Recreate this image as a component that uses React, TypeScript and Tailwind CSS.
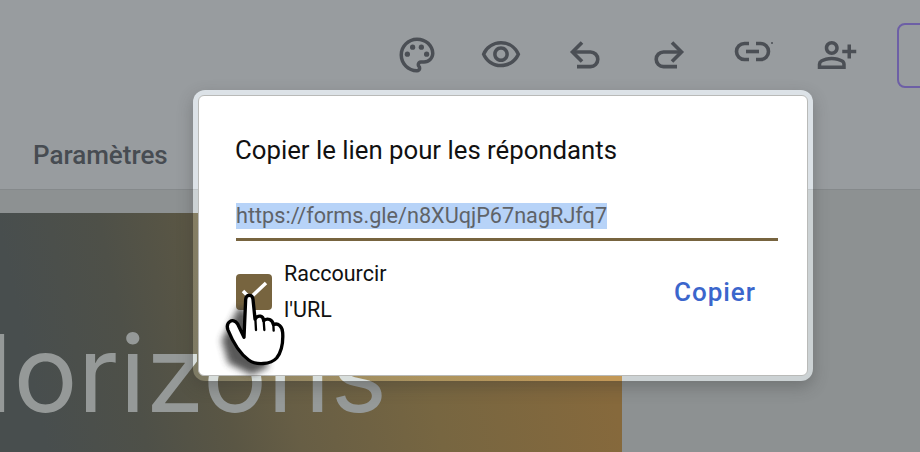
import { MdOutlinePalette, MdOutlineVisibility, MdOutlinePersonAddAlt } from "react-icons/md";

function UndoIcon() {
  return (
    <svg width={42} height={42} viewBox="0 0 42 42" fill="none" stroke="#4b4f55" strokeWidth={3.6}>
      <path d="M8.5 18 H26.5 A7.3 7.3 0 0 1 26.5 32.6 H13" />
      <path d="M18 8.5 L8.5 18 L18 27.5" />
    </svg>
  );
}

function RedoIcon() {
  return (
    <svg width={42} height={42} viewBox="0 0 42 42" fill="none" stroke="#4b4f55" strokeWidth={3.6}>
      <path d="M33.5 18 H15.5 A7.3 7.3 0 0 0 15.5 32.6 H29" />
      <path d="M24 8.5 L33.5 18 L24 27.5" />
    </svg>
  );
}

function LinkIcon() {
  return (
    <svg width={42} height={42} viewBox="0 0 42 42" fill="none" stroke="#4b4f55" strokeWidth={3.6}>
      <path d="M17 9.5 H12.5 A8 8 0 0 0 12.5 25.5 H17" />
      <path d="M24 9.5 H28.5 A8 8 0 0 1 28.5 25.5 H24" />
      <path d="M14 17.5 H27" />
      <circle cx={40} cy={9} r={1} fill="#4b4f55" stroke="none" />
    </svg>
  );
}

const toolbar = [
  { id: "palette", icon: <MdOutlinePalette size={42} color="#4b4f55" /> },
  { id: "preview", icon: <MdOutlineVisibility size={42} color="#4b4f55" /> },
  { id: "undo", icon: <UndoIcon /> },
  { id: "redo", icon: <RedoIcon /> },
  { id: "link", icon: <LinkIcon /> },
  { id: "share", icon: <MdOutlinePersonAddAlt size={42} color="#4b4f55" /> },
];

function HandCursor() {
  return (
    <svg
      className="absolute left-[-9px] top-[154px]"
      width={220}
      height={150}
      viewBox="0 0 660 450"
      fill="none"
    >
      <defs>
        <filter id="hand-blur" x="-40%" y="-40%" width="180%" height="180%">
          <feGaussianBlur stdDeviation="11" />
        </filter>
      </defs>
      <path
        d="M150 165 L95 270 L115 340 L185 375 L235 352 L200 220 Z"
        fill="#3a3a3a"
        opacity="0.85"
        filter="url(#hand-blur)"
      />
      <path
        d="M162 262 L167 148 C168 132 188 132 189 148 L195 207 C205 193 220 197 221 212 C232 203 248 208 250 224 C264 218 277 228 278 248 C280 280 274 306 260 324 C242 344 198 346 176 330 C152 312 130 280 114 240 C106 218 128 200 143 222 Z"
        fill="#fff"
        stroke="#000"
        strokeWidth="10"
        strokeLinejoin="round"
      />
      <path
        d="M196 205 L198 240 M221 212 L223 240 M250 224 L251 242"
        stroke="#000"
        strokeWidth="7"
        strokeLinecap="round"
      />
    </svg>
  );
}

function ShareDialog() {
  return (
    <div className="absolute left-[193px] top-[90px] w-[620px] rounded-xl p-[5px] shadow-[0_6px_16px_rgba(50,50,50,0.3)] backdrop-brightness-[1.45]">
      <div className="relative h-[281px] rounded-md border border-[#b9bab8] bg-white pl-[37px] pr-[29px] pt-[39px]">
        <h2 className="-ml-px text-[25.75px] leading-[30px] text-[#111]">
          Copier le lien pour les répondants
        </h2>
        <div className="mt-[38px] h-[38px] border-b-[3px] border-[#77643f]">
          <span className="inline-block bg-[#b7d3f8] text-[21.65px] leading-[26px] text-[#5f6368]">
            https://forms.gle/n8XUqjP67nagRJfq7
          </span>
        </div>
        <div className="mt-[15px] flex items-center">
          <div className="flex h-[36px] w-[36px] items-center justify-center rounded-[4px] bg-[#77643f]">
            <svg width="36" height="36" viewBox="0 0 36 36" fill="none">
              <path d="M7 17 L14 24 L30 9" stroke="#fff" strokeWidth="3.5" />
            </svg>
          </div>
          <div className="ml-[12px] w-[120px] text-[21.5px] leading-[36px] text-[#111]">
            Raccourcir
            <br />
            l'URL
          </div>
          <button className="ml-auto mr-[22px] text-[26px] font-medium tracking-[1px] text-[#3b66cc]">
            Copier
          </button>
        </div>
        <HandCursor />
      </div>
    </div>
  );
}

export default function App() {
  return (
    <div className="relative flex h-[452px] w-[920px] flex-col overflow-hidden bg-[#8d9192] font-['Roboto',sans-serif]">
      <header className="h-[190px] border-b border-[#85898b] bg-[#989c9f]">
        <div className="flex h-[110px] items-center pl-[396px]">
          {toolbar.map(({ id, icon }) => (
            <div key={id} className="flex w-[84px] shrink-0 items-center">
              {icon}
            </div>
          ))}
          <div className="ml-[-3px] h-[65px] w-[40px] shrink-0 rounded-lg border-2 border-[#6d5fa6]" />
        </div>
        <div className="pl-[33px] pt-[30px] text-[26px] font-medium leading-[30px] text-[#474c52]">
          Paramètres
        </div>
      </header>
      <div className="mt-[23px] flex-1">
        <div className="h-full w-[622px] overflow-hidden bg-[linear-gradient(78deg,#484e4e_7%,#4e5048_22%,#5a5644_35%,#675e45_45%,#776641_66%,#86693c_93%)]">
          <div className="ml-[-66px] mt-[106px] font-['Inter',sans-serif] text-[107px] leading-[108px] text-[#959998]">
            Horizons
          </div>
        </div>
      </div>
      <ShareDialog />
    </div>
  );
}
